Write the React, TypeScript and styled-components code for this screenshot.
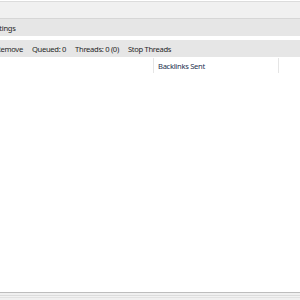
import * as React from "react";
import styled, { createGlobalStyle } from "styled-components";

const GlobalStyle = createGlobalStyle`
  html, body { margin: 0; padding: 0; background: #ffffff; }
  body { font-family: "Noto Sans", "Open Sans", sans-serif; }
`;

const Window = styled.div`
  width: 300px;
  height: 300px;
  overflow: hidden;
  display: flex;
  flex-direction: column;
  background: #ffffff;
`;

const TitleStrip = styled.div`
  height: 16px;
  margin-top: 1px;
  border-top: 1px solid #dcdcdc;
  border-bottom: 1px solid #d6d6d6;
  background: #f0f0f0;
`;

const Bar = styled.div<{ $offset: number }>`
  height: 17px;
  background: #e6e6e6;
  display: flex;
  align-items: center;
  gap: 9px;
  margin-left: ${(p) => p.$offset}px;
  font-size: 7.6px;
  letter-spacing: -0.3px;
  color: #262626;
  white-space: nowrap;
`;

const Spacer = styled.div`
  height: 4px;
  background: #ffffff;
`;

const BarItem = styled.span`
  display: inline-block;
`;

const List = styled.div`
  flex: 1;
  display: flex;
  flex-direction: column;
  background: #ffffff;
  margin-top: 1px;
`;

const HeaderRow = styled.div`
  display: grid;
  grid-template-columns: 154px 125px 1fr;
  height: 15px;
`;

const HeaderCell = styled.div<{ $divider?: boolean }>`
  border-right: ${(p) => (p.$divider ? "1px solid #e5e5e5" : "none")};
  padding-left: 4px;
  display: flex;
  align-items: center;
  font-size: 7.6px;
  letter-spacing: -0.3px;
  color: #1e3150;
  white-space: nowrap;
`;

const Body = styled.div`
  flex: 1;
`;

const Footer = styled.div`
  height: 7px;
  border-top: 1px solid #bdbdbd;
  background: linear-gradient(
    to bottom,
    #f0f0f0 0px,
    #f0f0f0 2px,
    #dcdcdc 2px,
    #dcdcdc 3px,
    #f2f2f2 3px,
    #f2f2f2 4px,
    #e2e2e2 4px,
    #e2e2e2 5px,
    #f0f0f0 5px
  );
`;

export default function App() {
  return (
    <>
      <GlobalStyle />
      <Window>
        <TitleStrip />
        <Bar $offset={-11}>
          <BarItem>Settings</BarItem>
        </Bar>
        <Spacer />
        <Bar $offset={-4}>
          <BarItem>Remove</BarItem>
          <BarItem>Queued: 0</BarItem>
          <BarItem>Threads: 0 (0)</BarItem>
          <BarItem>Stop Threads</BarItem>
        </Bar>
        <List>
          <HeaderRow>
            <HeaderCell $divider />
            <HeaderCell $divider>Backlinks Sent</HeaderCell>
            <HeaderCell />
          </HeaderRow>
          <Body />
        </List>
        <Footer />
      </Window>
    </>
  );
}
